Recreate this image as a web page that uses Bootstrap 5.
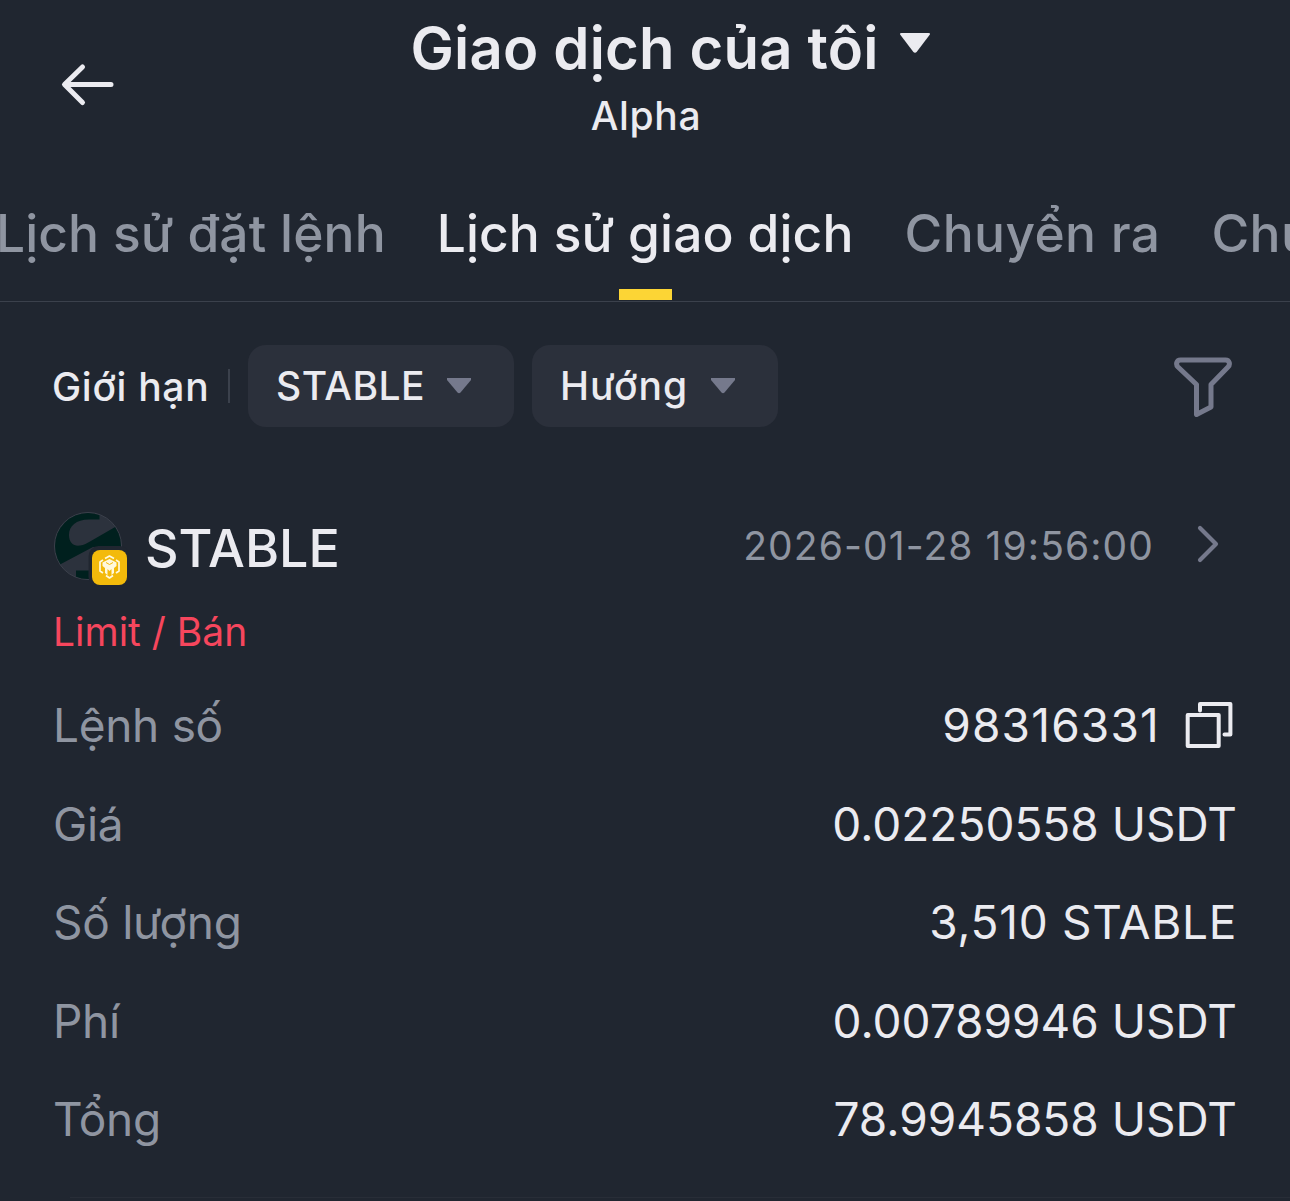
<!DOCTYPE html>
<html lang="vi">
<head>
  <meta charset="UTF-8">
  <title>Giao dịch của tôi</title>
  <meta name="viewport" content="width=device-width, initial-scale=1">
  <link href="https://cdn.jsdelivr.net/npm/bootstrap@5.3.0/dist/css/bootstrap.min.css" rel="stylesheet">
  <style>
    body {
      background-color: #202630;
      color: #ebebf0;
      font-family: Inter, "Noto Sans", sans-serif;
      height: 1201px;
      overflow: hidden;
    }
    svg {
      display: block;
      flex-shrink: 0;
    }

    /* header */
    .page-header {
      height: 180px;
      padding-left: 60px;
    }
    .back-btn {
      width: 56px;
      padding-top: 62px;
    }
    .page-heading {
      padding-top: 14px;
      margin-right: 63px;
    }
    .page-title {
      font-size: 58px;
      font-weight: 600;
      line-height: 68px;
      letter-spacing: .2px;
      gap: 18px;
    }
    .page-sub {
      font-size: 39px;
      font-weight: 500;
      line-height: 48px;
      letter-spacing: .7px;
      padding: 10px 51px 0 0;
    }

    /* tabs */
    .tab-bar {
      height: 122px;
      border-bottom: 1px solid #3b414c;
      gap: 51px;
      overflow: hidden;
      margin-left: -4px;
    }
    .tab-bar .nav-link {
      color: #8f95a1;
      font-size: 51.5px;
      font-weight: 500;
      line-height: 60px;
      letter-spacing: .1px;
      padding: 23px 0 0;
      white-space: nowrap;
    }
    .tab-bar .nav-link.active {
      color: #ebebf0;
    }
    .tab-bar .tab-out {
      letter-spacing: .4px;
    }
    .tab-line {
      width: 53px;
      height: 11px;
      margin: 26px auto 0;
      background-color: #fcd535;
    }

    /* filters */
    .filter-bar {
      height: 82px;
      margin: 43px 57px 0 52px;
      font-size: 39px;
      font-weight: 500;
      line-height: 82px;
    }
    .filter-label {
      width: 176px;
      letter-spacing: .7px;
      padding-top: 1px;
    }
    .filter-sep {
      width: 2px;
      height: 34px;
      background-color: #3b414c;
      margin-right: 18px;
    }
    .chip {
      height: 82px;
      border-radius: 18px;
      background-color: #2b303b;
      padding: 0 43px 0 28px;
      margin-right: 18px;
      line-height: 80px;
    }
    .chip-token {
      width: 266px;
      letter-spacing: .5px;
    }
    .chip-side {
      width: 246px;
      letter-spacing: 1px;
    }

    /* order */
    .order-head {
      height: 74px;
      margin: 84px 70px 0 53px;
    }
    .coin-name {
      font-size: 52px;
      font-weight: 500;
      line-height: 76px;
      padding-left: 16px;
    }
    .order-date {
      font-size: 39px;
      line-height: 69px;
      letter-spacing: 1.1px;
      color: #8f95a1;
    }
    .order-side {
      margin: 17px 0 0 53px;
      font-size: 39px;
      line-height: 60px;
      color: #f6465d;
    }
    .order-list {
      padding-top: 14px;
    }
    .order-row {
      margin: 0 53px;
      font-size: 46px;
      height: 98.6px;
      line-height: 98px;
    }
    .order-row dt {
      font-weight: 400;
      color: #8f95a1;
      letter-spacing: -.3px;
    }
    .order-row dd {
      margin: 0;
    }
    .order-id {
      letter-spacing: 1.2px;
    }
    .order-qty {
      letter-spacing: .7px;
    }
    .order-end {
      border-top: 1px solid #282d37;
      margin: 28px 0 0 70px;
    }
  </style>
</head>
<body>

<header class="page-header d-flex align-items-start">
  <a class="back-btn" href="#" aria-label="Back">
    <svg width="56" height="46" viewBox="0 0 56 46" fill="none" stroke="#ebebf0" stroke-width="5" stroke-linecap="round" stroke-linejoin="round">
      <path d="M22.500 5L4.500 22.500L22.500 40.500M5 22.500H51"/>
    </svg>
  </a>
  <div class="page-heading flex-grow-1 text-center">
    <div class="page-title d-flex justify-content-center">
      <span>Giao dịch của tôi</span>
      <svg width="36" height="68" viewBox="0 0 36 68" fill="#ebebf0">
        <path d="M4.500 19H31.500Q34 19 32.500 21L20 37.500Q18 40 16 37.500L3.500 21Q2 19 4.500 19Z"/>
      </svg>
    </div>
    <div class="page-sub">Alpha</div>
  </div>
</header>

<ul class="nav tab-bar flex-nowrap">
  <li class="nav-item"><a class="nav-link" href="#">Lịch sử đặt lệnh</a></li>
  <li class="nav-item">
    <a class="nav-link active" href="#">Lịch sử giao dịch</a>
    <div class="tab-line"></div>
  </li>
  <li class="nav-item"><a class="nav-link tab-out" href="#">Chuyển ra</a></li>
  <li class="nav-item"><a class="nav-link tab-out" href="#">Chuyển vào</a></li>
</ul>

<div class="filter-bar d-flex align-items-center">
  <div class="filter-label">Giới hạn</div>
  <div class="filter-sep"></div>
  <div class="chip chip-token d-flex align-items-center justify-content-between">
    <span>STABLE</span>
    <svg width="24" height="16" viewBox="0 0 24 16" fill="#75798c"><path d="M0 0H24V2L13.500 14.500Q12 16 10.500 14.500L0 2Z"/></svg>
  </div>
  <div class="chip chip-side d-flex align-items-center justify-content-between">
    <span>Hướng</span>
    <svg width="24" height="16" viewBox="0 0 24 16" fill="#75798c"><path d="M0 0H24V2L13.500 14.500Q12 16 10.500 14.500L0 2Z"/></svg>
  </div>
  <svg class="ms-auto" width="60" height="62" viewBox="0 0 60 62" fill="none" stroke="#75798c" stroke-width="5" stroke-linejoin="round">
    <path d="M7.500 5H52.500C56.500 5 57.500 9.500 55 12L38 29.500V52L23.500 59.500V29.500L5 12C2.500 9.500 3.500 5 7.500 5Z"/>
  </svg>
</div>

<main>
  <div class="order-head d-flex align-items-start">
    <svg width="76" height="76" viewBox="0 0 76 76">
      <defs>
        <clipPath id="coin"><circle cx="35" cy="35" r="33"/></clipPath>
      </defs>
      <circle cx="35" cy="35" r="33.500" fill="#2c323d" stroke="#3b404b" stroke-width="1"/>
      <g clip-path="url(#coin)" fill="#00201e">
        <path d="M0 0H46.500V8.500H36C23 8.500 16 15 16 24C16 32 21 35.500 27 34.500C31 34 34 32 37 30.500L63 15.500L72 24V36H40L7 53.500L0 50Z"/>
        <path d="M23 59.500H40V70H23Z"/>
      </g>
      <rect x="35.500" y="35" width="41" height="41" rx="10" fill="#202630"/>
      <rect x="39" y="39" width="35" height="35" rx="8" fill="#f3ba0b"/>
      <g fill="none" stroke="#fff8dc" stroke-width="1.700" stroke-linejoin="round">
        <path d="M52 47.500L56.500 45L61 47.500M50 49L47 51V60L50 62M63 49L66 51V60L63 62M53 64.500L56.500 67L60 64.500"/>
      </g>
      <path fill="#fff8dc" d="M49.500 51.500L56.500 48L63.500 51.500V55L61 57V62L58.500 64V58L56.500 60L54.500 58V64L52 62V57L49.500 55Z"/>
      <path fill="none" stroke="#f3ba0b" stroke-width="1" d="M53 51.500L56.500 53.500L60 51.500"/>
    </svg>
    <span class="coin-name">STABLE</span>
    <span class="order-date ms-auto">2026-01-28 19:56:00</span>
    <svg width="66" height="68" viewBox="0 0 66 68" fill="none" stroke="#75798c" stroke-width="4.200" stroke-linecap="round" stroke-linejoin="round">
      <path d="M46 17L62 33L46 49"/>
    </svg>
  </div>

  <div class="order-side">Limit / Bán</div>

  <dl class="order-list m-0">
    <div class="order-row d-flex justify-content-between">
      <dt>Lệnh số</dt>
      <dd class="order-id d-flex align-items-center">98316331
        <svg width="77" height="98" viewBox="1 0 77 98" fill="none" stroke="#ebebf0" stroke-width="4" stroke-linejoin="round" stroke-linecap="round">
          <rect x="28.700" y="39" width="31" height="31"/>
          <path d="M41 34.500V28H71.400V58.500H65.500"/>
        </svg>
      </dd>
    </div>
    <div class="order-row d-flex justify-content-between">
      <dt>Giá</dt>
      <dd>0.02250558 USDT</dd>
    </div>
    <div class="order-row d-flex justify-content-between">
      <dt>Số lượng</dt>
      <dd class="order-qty">3,510 STABLE</dd>
    </div>
    <div class="order-row d-flex justify-content-between">
      <dt>Phí</dt>
      <dd>0.00789946 USDT</dd>
    </div>
    <div class="order-row d-flex justify-content-between">
      <dt>Tổng</dt>
      <dd>78.9945858 USDT</dd>
    </div>
  </dl>
  <div class="order-end"></div>
</main>

<script src="https://cdn.jsdelivr.net/npm/bootstrap@5.3.0/dist/js/bootstrap.bundle.min.js"></script>
</body>
</html>
